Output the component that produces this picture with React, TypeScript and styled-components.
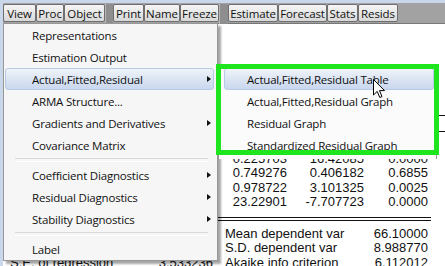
import React from 'react';
import styled, { createGlobalStyle } from 'styled-components';

const GlobalStyle = createGlobalStyle`
  html, body {
    margin: 0;
    padding: 0;
    background: #c9d7ea;
  }
  * {
    box-sizing: border-box;
  }
`;

const uiFont = `'Open Sans', 'Noto Sans', sans-serif`;
const tableFont = `'Liberation Sans', Arial, sans-serif`;

const Frame = styled.div`
  width: 445px;
  height: 266px;
  padding: 3px 0 0 3px;
  display: flex;
  flex-direction: column;
  overflow: hidden;
  background: #c9d7ea;
`;

const Toolbar = styled.div`
  display: flex;
  align-items: flex-start;
  height: 21px;
  padding-top: 1px;
  background: #a2a2a2;
  border-bottom: 1px solid #777;
`;

const ToolButton = styled.div<{ $w: number }>`
  width: ${p => p.$w}px;
  height: 18px;
  display: flex;
  align-items: center;
  justify-content: center;
  font-family: ${uiFont};
  font-size: 11.5px;
  letter-spacing: -0.1px;
  color: #111;
  background: linear-gradient(to bottom, #f6f6f6, #e4e4e4 60%, #d8d8d8);
  border: 1px solid #6f6f6f;
  border-radius: 2px;
`;

const ToolGap = styled.div<{ $w: number }>`
  width: ${p => p.$w}px;
  height: 20px;
  background: #8e8e8e;
  border-left: 1px solid #b8b8b8;
`;

const Body = styled.div`
  position: relative;
  flex: 1;
  background: #fff;
`;

const Output = styled.div`
  padding: 4px 0 0 7px;
  font-family: ${tableFont};
  font-size: 13px;
  color: #111;
`;

const InfoLine = styled.div`
  height: 14.5px;
  line-height: 14.5px;
  white-space: nowrap;
`;

const Grid = styled.div`
  display: grid;
  grid-template-columns: 140px 63px 74px 77px 64px;
  height: 14.5px;
  line-height: 14.5px;
  white-space: nowrap;
`;

const Cell = styled.span<{ $left?: boolean; $pad?: number; $span?: number }>`
  text-align: ${p => (p.$left ? 'left' : 'right')};
  padding-left: ${p => p.$pad || 0}px;
  grid-column: span ${p => p.$span || 1};
`;

const HeadRow = styled(Grid)`
  margin-top: 14.5px;
  border-top: 1px solid #111;
  border-bottom: 1px solid #111;
  height: 16.5px;
  margin-bottom: 5.75px;
`;

const DoubleRule = styled.div`
  width: 421px;
  height: 4px;
  margin: 7.25px 0 5.5px;
  border-top: 1px solid #111;
  border-bottom: 1px solid #111;
`;

const Menu = styled.div`
  position: absolute;
  left: 0;
  top: -1px;
  width: 215px;
  padding: 0 3px 0 1px;
  background: #f6f6f6;
  border: 1px solid #979797;
  box-shadow: 3px 3px 2px rgba(0, 0, 0, 0.35);
  font-family: ${uiFont};
  font-size: 11.5px;
  color: #111;
`;

const SubMenu = styled(Menu)`
  left: 215px;
  top: 43px;
  width: 219px;
  height: 92px;
  overflow: hidden;
  padding: 0 2px 0 5px;
  background: #fbfbfb;
  border-bottom: none;
  box-shadow: none;
`;

const Item = styled.div<{ $active?: boolean; $indent: number }>`
  position: relative;
  height: 22px;
  display: flex;
  align-items: center;
  padding-left: ${p => p.$indent}px;
  white-space: nowrap;
  letter-spacing: -0.2px;
  border: 1px solid ${p => (p.$active ? '#b7cae6' : 'transparent')};
  border-radius: 3px;
  background: ${p => (p.$active ? 'linear-gradient(to bottom, #f0f4fa, #d9e3f2 55%, #c9d7ee)' : 'transparent')};
`;

const Arrow = styled.span`
  position: absolute;
  right: 2px;
  top: 7px;
  width: 0;
  height: 0;
  border-top: 3.5px solid transparent;
  border-bottom: 3.5px solid transparent;
  border-left: 4px solid #111;
`;

const Separator = styled.div`
  height: 8px;
  margin: 0 6px 0 10px;
  display: flex;
  align-items: center;
  &::after {
    content: '';
    flex: 1;
    height: 2px;
    border-top: 1px solid #dadada;
    border-bottom: 1px solid #fff;
  }
`;

const Highlight = styled.div`
  position: absolute;
  left: 213px;
  top: 40px;
  width: 223px;
  height: 91px;
  border: 5px solid #1ee51e;
`;

const Cursor = styled.svg`
  position: absolute;
  left: 370px;
  top: 55px;
`;

type MenuEntry = { label: string; sub?: boolean; active?: boolean } | 'sep';

const mainItems: MenuEntry[] = [
  { label: 'Representations' },
  { label: 'Estimation Output' },
  { label: 'Actual,Fitted,Residual', sub: true, active: true },
  { label: 'ARMA Structure...' },
  { label: 'Gradients and Derivatives', sub: true },
  { label: 'Covariance Matrix' },
  'sep',
  { label: 'Coefficient Diagnostics', sub: true },
  { label: 'Residual Diagnostics', sub: true },
  { label: 'Stability Diagnostics', sub: true },
  'sep',
  { label: 'Label' },
];

const subItems = [
  { label: 'Actual,Fitted,Residual Table', active: true },
  { label: 'Actual,Fitted,Residual Graph' },
  { label: 'Residual Graph' },
  { label: 'Standardized Residual Graph' },
];

const coefs = [
  ['X1', '4.159741', '0.253346', '16.41912', '0.0000'],
  ['X2', '3.706214', '0.225703', '16.42085', '0.0000'],
  ['X3', '0.304145', '0.749276', '0.406182', '0.6855'],
  ['X4', '3.035327', '0.978722', '3.101325', '0.0025'],
  ['C', '-179.0208', '23.22901', '-7.707723', '0.0000'],
];

const stats = [
  ['R-squared', '0.871241', 'Mean dependent var', '66.10000'],
  ['Adjusted R-squared', '0.845489', 'S.D. dependent var', '8.988770'],
  ['S.E. of regression', '3.533236', 'Akaike info criterion', '6.112012'],
];

const App: React.FC = () => {
  return (
    <>
      <GlobalStyle />
      <Frame>
        <Toolbar>
          <ToolButton $w={33}>View</ToolButton>
          <ToolButton $w={28}>Proc</ToolButton>
          <ToolButton $w={41}>Object</ToolButton>
          <ToolGap $w={8} />
          <ToolButton $w={31}>Print</ToolButton>
          <ToolButton $w={36}>Name</ToolButton>
          <ToolButton $w={39}>Freeze</ToolButton>
          <ToolGap $w={9} />
          <ToolButton $w={50}>Estimate</ToolButton>
          <ToolButton $w={49}>Forecast</ToolButton>
          <ToolButton $w={31}>Stats</ToolButton>
          <ToolButton $w={40}>Resids</ToolButton>
        </Toolbar>
        <Body>
          <Output>
            <InfoLine>Dependent Variable: Y</InfoLine>
            <InfoLine>Method: Least Squares</InfoLine>
            <InfoLine>Date: 05/14/13 Time: 10:22</InfoLine>
            <InfoLine>Sample: 1 100</InfoLine>
            <InfoLine>Included observations: 100</InfoLine>
            <HeadRow>
              <Cell $left>Variable</Cell>
              <Cell>Coefficient</Cell>
              <Cell>Std. Error</Cell>
              <Cell>t-Statistic</Cell>
              <Cell>Prob.</Cell>
            </HeadRow>
            {coefs.map(r => (
              <Grid key={r[0]}>
                <Cell $left>{r[0]}</Cell>
                <Cell>{r[1]}</Cell>
                <Cell>{r[2]}</Cell>
                <Cell>{r[3]}</Cell>
                <Cell>{r[4]}</Cell>
              </Grid>
            ))}
            <DoubleRule />
            {stats.map(r => (
              <Grid key={r[0]}>
                <Cell $left>{r[0]}</Cell>
                <Cell>{r[1]}</Cell>
                <Cell $left $pad={12} $span={2}>{r[2]}</Cell>
                <Cell>{r[3]}</Cell>
              </Grid>
            ))}
          </Output>

          <Menu>
            {mainItems.map((it, i) =>
              it === 'sep' ? (
                <Separator key={i} />
              ) : (
                <Item key={i} $indent={26} $active={it.active}>
                  {it.label}
                  {it.sub && <Arrow />}
                </Item>
              )
            )}
          </Menu>

          <SubMenu>
            {subItems.map(it => (
              <Item key={it.label} $indent={22} $active={it.active}>
                {it.label}
              </Item>
            ))}
          </SubMenu>

          <Highlight />

          <Cursor width="13" height="20" viewBox="0 0 13 20">
            <path
              d="M0.5 0.5 L0.5 16 L4.2 12.4 L6.8 18.5 L9 17.6 L6.5 11.6 L11.5 11.6 Z"
              fill="#fff"
              stroke="#000"
              strokeWidth="1"
              strokeLinejoin="miter"
            />
          </Cursor>
        </Body>
      </Frame>
    </>
  );
};

export default App;
